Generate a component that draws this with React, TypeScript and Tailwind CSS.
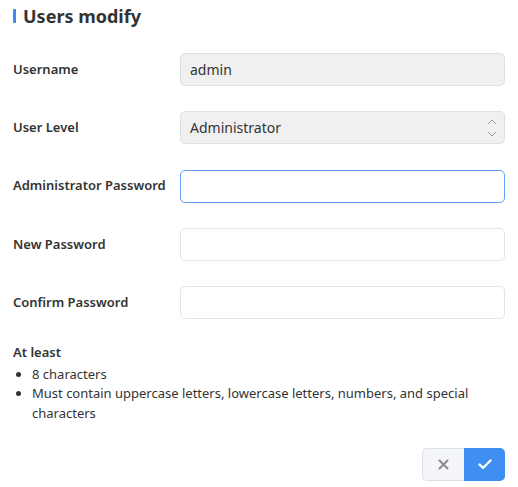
import React from "react";

function Field({ label, children }: { label: string; children: React.ReactNode }) {
  return (
    <div className="flex h-[33px] items-center">
      <label className="w-[167px] shrink-0 text-[13px] font-semibold text-[#333]">{label}</label>
      <div className="flex-1">{children}</div>
    </div>
  );
}

function Chevrons() {
  return (
    <svg width="10" height="22" viewBox="0 0 10 22" fill="none" stroke="#9a9a9a" strokeWidth="1" strokeLinecap="round" strokeLinejoin="round">
      <path d="M1.5 6.5 L5 3 L8.5 6.5" />
      <path d="M1.5 15.5 L5 19 L8.5 15.5" />
    </svg>
  );
}

export default function App() {
  const box = "h-[33px] w-full rounded-[5px] border px-[9px] text-[14px] text-[#333] outline-none";
  return (
    <div className="w-[518px] h-[487px] bg-white text-[#333]" style={{ fontFamily: '"Noto Sans", "Open Sans", sans-serif' }}>
      <div className="flex items-center gap-[7px] pl-[13px] pt-[6px]">
        <span className="h-[14px] w-[3px] bg-[#3f8ef2]" />
        <h1 className="text-[18px] font-bold leading-[20px] text-[#333]">Users modify</h1>
      </div>

      <div className="mt-[27px] flex flex-col gap-[25.3px] px-[13px]">
        <Field label="Username">
          <input readOnly value="admin" className={`${box} border-[#e0e0e0] bg-[#f0f0f0]`} />
        </Field>
        <Field label="User Level">
          <div className={`${box} flex items-center justify-between border-[#e0e0e0] bg-[#f0f0f0] pr-[7px]`}>
            <span>Administrator</span>
            <Chevrons />
          </div>
        </Field>
        <Field label="Administrator Password">
          <input type="password" className={`${box} border-[#62a1f6] bg-white`} />
        </Field>
        <Field label="New Password">
          <input type="password" className={`${box} border-[#e2e4ea] bg-white`} />
        </Field>
        <Field label="Confirm Password">
          <input type="password" className={`${box} border-[#e2e4ea] bg-white`} />
        </Field>
      </div>

      <div className="mt-[24px] px-[13px] text-[13px] leading-[19.5px] text-[#333]">
        <div className="font-semibold">At least</div>
        <ul className="mt-[2px] list-disc pl-[19px]">
          <li>8 characters</li>
          <li>Must contain uppercase letters, lowercase letters, numbers, and special characters</li>
        </ul>
      </div>

      <div className="mt-[25px] flex justify-end pr-[13px]">
        <button className="flex h-[33px] w-[42px] items-center justify-center rounded-l-[5px] border border-r-0 border-[#dcdfe6] bg-[#f4f5f8]">
          <svg width="11" height="11" viewBox="0 0 11 11" stroke="#8a8a8a" strokeWidth="2" strokeLinecap="round">
            <path d="M1.5 1.5 L9.5 9.5 M9.5 1.5 L1.5 9.5" />
          </svg>
        </button>
        <button className="flex h-[33px] w-[41px] items-center justify-center rounded-r-[5px] bg-[#3f8ef2]">
          <svg width="14" height="11" viewBox="0 0 14 11" fill="none" stroke="#fff" strokeWidth="2.4" strokeLinecap="round" strokeLinejoin="round">
            <path d="M1.5 5.5 L5 9 L12.5 1.5" />
          </svg>
        </button>
      </div>
    </div>
  );
}
